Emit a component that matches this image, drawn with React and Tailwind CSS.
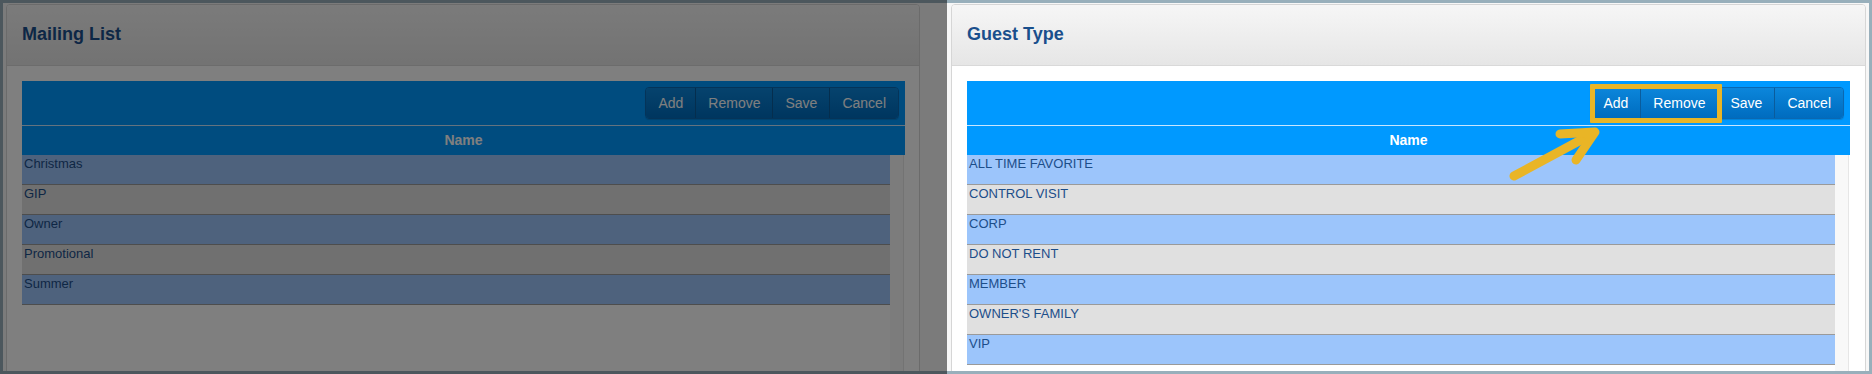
import React from "react";

function Grid({ items }) {
  const buttons = ["Add", "Remove", "Save", "Cancel"];
  return (
    <div className="w-[883px]">
      <div className="h-[44px] bg-[#0099ff] flex items-center justify-end pr-[6px]">
        <div className="flex h-[32px] rounded-[4px] border border-[#0a68b2] overflow-hidden shadow-[0_1px_1px_rgba(0,0,0,0.15)]">
          {buttons.map((b, i) => (
            <div
              key={b}
              className={
                "h-full flex items-center px-[12px] text-[14px] text-white bg-gradient-to-b from-[#0c86db] to-[#006cbf] " +
                (i > 0 ? "border-l border-[#0a5c9c]" : "")
              }
            >
              {b}
            </div>
          ))}
        </div>
      </div>
      <div className="h-px bg-[#c8e6ff]" />
      <div className="h-[29px] bg-[#0099ff] flex items-center justify-center text-[14px] font-bold text-white">
        Name
      </div>
      <div className="flex">
        <div className="w-[868px]">
          {items.map((it, i) => (
            <div
              key={it}
              className={
                "h-[30px] border-b border-[#9a9a9a] pl-[2px] pt-[1px] text-[13px] leading-[15px] text-[#1c4e8a] " +
                (i % 2 === 0 ? "bg-[#9cc5fb]" : "bg-[#e0e0e0]")
              }
            >
              {it}
            </div>
          ))}
        </div>
        <div className="w-[14px] h-[260px] bg-[#f8f8f8] border-r border-[#e6e6e6]" />
      </div>
    </div>
  );
}

function Card({ title, items, className }) {
  return (
    <div className={"w-[915px] h-[420px] shrink-0 bg-white border border-[#d6d6d6] rounded-[4px] overflow-hidden " + className}>
      <div className="h-[61px] border-b border-[#d9d9d9] bg-gradient-to-b from-[#f6f6f6] to-[#e6e6e6] flex items-center px-[15px] pb-[1px]">
        <span className="text-[18px] font-bold text-[#1a4f8c]">{title}</span>
      </div>
      <div className="pt-[15px] px-[15px]">
        <Grid items={items} />
      </div>
    </div>
  );
}

export default function App() {
  return (
    <div className="relative w-[1872px] h-[374px] overflow-hidden font-['Liberation_Sans',Arial,sans-serif]">
      <div className="w-full h-full border-[3px] border-[#98afbb] bg-[#f7f7f7] flex items-start overflow-hidden">
        <Card
          title="Mailing List"
          items={["Christmas", "GIP", "Owner", "Promotional", "Summer"]}
          className="ml-[3px] mt-[1px] !w-[914px]"
        />
        <Card
          title="Guest Type"
          items={[
            "ALL TIME FAVORITE",
            "CONTROL VISIT",
            "CORP",
            "DO NOT RENT",
            "MEMBER",
            "OWNER'S FAMILY",
            "VIP",
          ]}
          className="ml-[31px] mt-[1px]"
        />
      </div>
      <div className="absolute left-0 top-0 w-[947px] h-full bg-black/50" />
      <div className="absolute left-[1590px] top-[84px] w-[132px] h-[39px] border-[5px] border-[#e9b526] rounded-[1px]" />
      <svg className="absolute left-0 top-0 pointer-events-none" width="1872" height="374">
        <g stroke="#e9b526" strokeWidth="9" strokeLinecap="round" strokeLinejoin="round" fill="none">
          <path d="M1514 176 L1592 134" />
          <path d="M1560 134 L1595 132 L1576 160" />
        </g>
      </svg>
    </div>
  );
}
